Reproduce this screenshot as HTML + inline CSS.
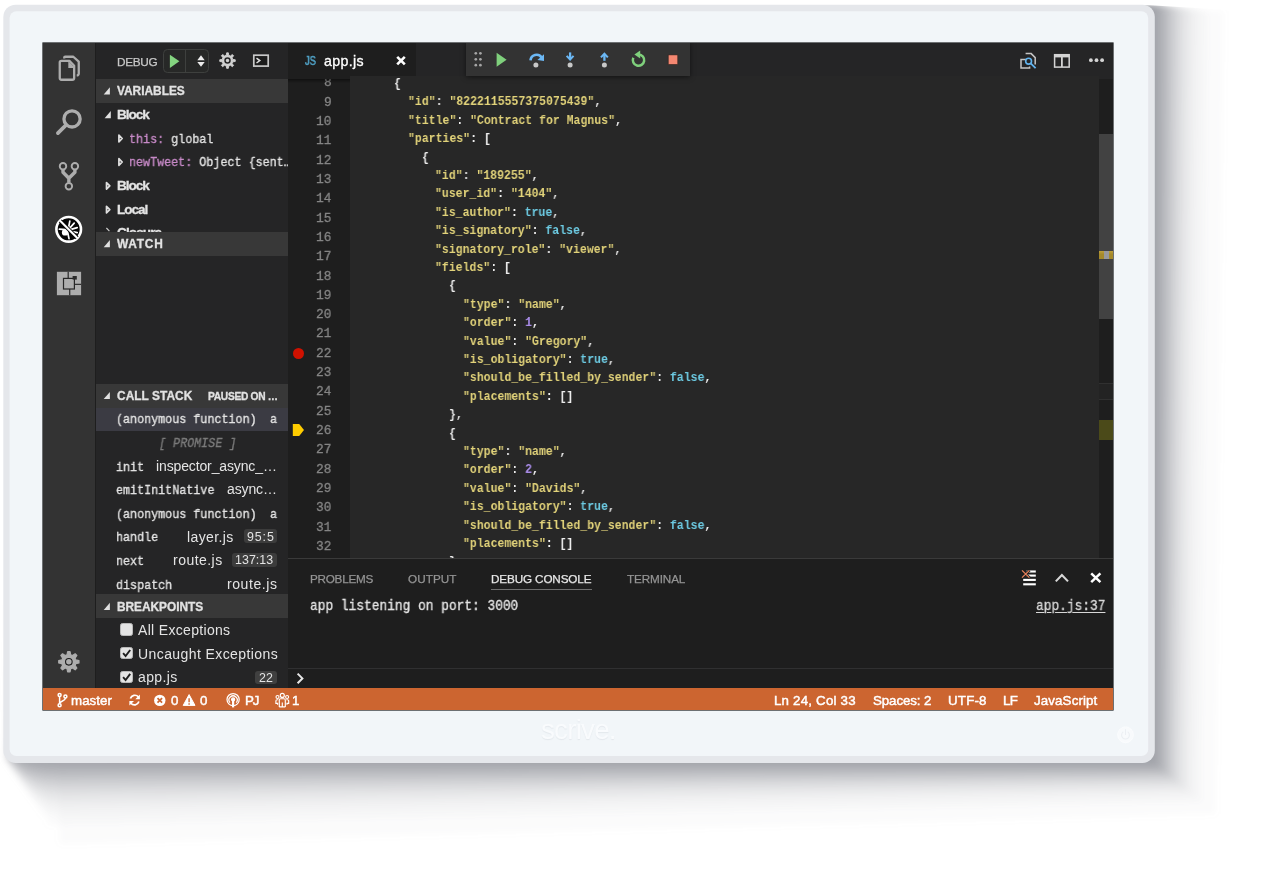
<!DOCTYPE html>
<html lang="en"><head><meta charset="utf-8"><title>Debug - app.js</title>
<style>
html,body{margin:0;padding:0;background:#fff;}
body{width:1280px;height:896px;position:relative;overflow:hidden;font-family:"Liberation Sans",sans-serif;}
.b{position:absolute;box-sizing:border-box;}
.t{position:absolute;white-space:pre;line-height:1em;will-change:transform;}
.s{font-family:"Liberation Sans",sans-serif;}
.m{font-family:"Liberation Mono",monospace;transform-origin:0 0;display:inline-block;}
svg{display:block;overflow:visible;}
.clip{position:absolute;overflow:hidden;}
.hv{-webkit-text-stroke:0.33px currentColor;}
.k{color:#e2d37a}.v{color:#6dcbe3}.n{color:#a98ce8}.p{color:#f0f0f0}
</style></head>
<body>
<svg class="b" style="left:0;top:0" width="1280" height="896" viewBox="0 0 1280 896"><filter id="shb" filterUnits="userSpaceOnUse" x="0" y="0" width="1280" height="896"><feGaussianBlur stdDeviation="3.0"/></filter><mask id="shm" maskUnits="userSpaceOnUse" x="0" y="0" width="1280" height="896"><g fill="#fff" fill-opacity="0.0387" filter="url(#shb)"><polygon points="25.3,26.7 1223.8,10.7 1215.8,814.1 59.8,844.1"/><polygon points="25.3,26.7 1208.0,8.9 1201.8,802.3 47.3,824.9"/><polygon points="25.3,26.7 1200.6,8.0 1195.2,796.9 41.6,815.9"/><polygon points="25.3,26.7 1195.7,7.5 1190.9,793.2 37.7,810.0"/><polygon points="25.3,26.7 1192.1,7.1 1187.7,790.6 34.9,805.6"/><polygon points="25.3,26.7 1189.2,6.7 1185.2,788.4 32.6,802.1"/><polygon points="25.3,26.7 1186.8,6.5 1183.0,786.6 30.7,799.2"/><polygon points="25.3,26.7 1184.7,6.2 1181.2,785.1 29.1,796.7"/><polygon points="25.3,26.7 1182.9,6.0 1179.6,783.7 27.7,794.5"/><polygon points="25.3,26.7 1181.3,5.8 1178.2,782.5 26.4,792.5"/><polygon points="25.3,26.7 1179.9,5.7 1176.9,781.5 25.3,790.8"/><polygon points="25.3,26.7 1178.6,5.5 1175.7,780.5 24.3,789.2"/><polygon points="25.3,26.7 1177.4,5.4 1174.7,779.6 23.3,787.7"/><polygon points="25.3,26.7 1176.3,5.3 1173.7,778.8 22.4,786.4"/><polygon points="25.3,26.7 1175.2,5.1 1172.8,778.0 21.6,785.1"/><polygon points="25.3,26.7 1174.3,5.0 1171.9,777.3 20.9,783.9"/><polygon points="25.3,26.7 1173.4,4.9 1171.1,776.6 20.2,782.8"/><polygon points="25.3,26.7 1172.5,4.8 1170.4,776.0 19.5,781.8"/><polygon points="25.3,26.7 1171.7,4.7 1169.7,775.4 18.9,780.8"/><polygon points="25.3,26.7 1170.9,4.7 1169.0,774.8 18.3,779.9"/><polygon points="25.3,26.7 1170.2,4.6 1168.3,774.3 17.7,779.0"/><polygon points="25.3,26.7 1169.5,4.5 1167.7,773.8 17.2,778.2"/><polygon points="25.3,26.7 1168.9,4.4 1167.2,773.3 16.6,777.4"/><polygon points="25.3,26.7 1168.3,4.4 1166.6,772.8 16.2,776.7"/><polygon points="25.3,26.7 1167.7,4.3 1166.1,772.4 15.7,775.9"/><polygon points="25.3,26.7 1167.1,4.2 1165.6,772.0 15.2,775.2"/><polygon points="25.3,26.7 1166.5,4.2 1165.1,771.5 14.8,774.5"/><polygon points="25.3,26.7 1166.0,4.1 1164.6,771.2 14.4,773.9"/><polygon points="25.3,26.7 1165.5,4.0 1164.1,770.8 14.0,773.3"/><polygon points="25.3,26.7 1165.0,4.0 1163.7,770.4 13.6,772.7"/><polygon points="25.3,26.7 1164.5,3.9 1163.3,770.0 13.2,772.1"/><polygon points="25.3,26.7 1164.0,3.9 1162.9,769.7 12.8,771.5"/><polygon points="25.3,26.7 1163.6,3.8 1162.5,769.4 12.5,771.0"/><polygon points="25.3,26.7 1163.1,3.8 1162.1,769.0 12.1,770.4"/><polygon points="25.3,26.7 1162.7,3.7 1161.7,768.7 11.8,769.9"/><polygon points="25.3,26.7 1162.3,3.7 1161.3,768.4 11.5,769.4"/><polygon points="25.3,26.7 1161.9,3.6 1161.0,768.1 11.2,768.9"/><polygon points="25.3,26.7 1161.5,3.6 1160.6,767.8 10.9,768.5"/><polygon points="25.3,26.7 1161.1,3.5 1160.3,767.5 10.6,768.0"/><polygon points="25.3,26.7 1160.8,3.5 1160.0,767.3 10.3,767.6"/><polygon points="25.3,26.7 1160.4,3.5 1159.6,767.0 10.0,767.1"/><polygon points="25.3,26.7 1160.0,3.4 1159.3,766.7 9.7,766.7"/><polygon points="25.3,26.7 1159.7,3.4 1159.0,766.5 9.4,766.3"/><polygon points="25.3,26.7 1159.4,3.3 1158.7,766.2 9.2,765.9"/><polygon points="25.3,26.7 1159.0,3.3 1158.4,766.0 8.9,765.5"/><polygon points="25.3,26.7 1158.7,3.3 1158.2,765.8 8.7,765.1"/><polygon points="25.3,26.7 1158.4,3.2 1157.9,765.5 8.4,764.7"/><polygon points="25.3,26.7 1158.1,3.2 1157.6,765.3 8.2,764.3"/><polygon points="25.3,26.7 1157.8,3.2 1157.3,765.1 7.9,764.0"/><polygon points="25.3,26.7 1157.5,3.1 1157.1,764.9 7.7,763.6"/><polygon points="25.3,26.7 1157.2,3.1 1156.8,764.6 7.5,763.3"/><polygon points="25.3,26.7 1156.9,3.1 1156.6,764.4 7.3,762.9"/><polygon points="25.3,26.7 1156.7,3.0 1156.3,764.2 7.0,762.6"/><polygon points="25.3,26.7 1156.4,3.0 1156.1,764.0 6.8,762.2"/><polygon points="25.3,26.7 1156.1,3.0 1155.9,763.8 6.6,761.9"/><polygon points="25.3,26.7 1155.9,2.9 1155.6,763.6 6.4,761.6"/><polygon points="25.3,26.7 1155.6,2.9 1155.4,763.4 6.2,761.3"/><polygon points="25.3,26.7 1155.3,2.9 1155.2,763.2 6.0,761.0"/><polygon points="25.3,26.7 1155.1,2.8 1154.9,763.1 5.8,760.7"/><polygon points="25.3,26.7 1154.9,2.8 1154.7,762.9 5.6,760.4"/><polygon points="25.3,26.7 1154.6,2.8 1154.5,762.7 5.4,760.1"/><polygon points="25.3,26.7 1154.4,2.8 1154.3,762.5 5.3,759.8"/><polygon points="25.3,26.7 1154.1,2.7 1154.1,762.4 5.1,759.5"/><polygon points="25.3,26.7 1153.9,2.7 1153.9,762.2 4.9,759.2"/></g></mask><clipPath id="shc"><path d="M0 5.2H1150L1280 13V896H0Z"/></clipPath><g clip-path="url(#shc)"><rect x="0" y="0" width="1280" height="896" fill="#62646f" fill-opacity="0.68" mask="url(#shm)"/></g></svg>
<svg class="b" style="left:0;top:0" width="1280" height="896" viewBox="0 0 1280 896"><rect x="3.3" y="4.7" width="1151.50" height="758.20" rx="12.3" fill="#e5e7eb"/><rect x="9.6" y="11.2" width="1138.60" height="744.90" rx="6.8" fill="#f2f6f9"/><circle cx="1125.5" cy="734.8" r="7.9" fill="#f8fafc" stroke="#fbfdfe" stroke-width="0.8"/><path d="M1122.9 732.2a3.9 3.9 0 1 0 5.2 0M1125.5 729.6v4.9" fill="none" stroke="#eceff3" stroke-width="1.1" stroke-linecap="round"/></svg>
<span class="t s" style="left:541.30px;top:716.36px;font-size:27.8px;color:#f9fbfd;letter-spacing:-0.787px;text-shadow:0 1px 1px rgba(120,130,150,.12);">scrive.</span>
<div class="b" style="left:42.70px;top:42.60px;width:1070.50px;height:667.00px;background:#1e1e1e;box-shadow:0 0 0 0.6px #16181a;"></div>
<div class="b" style="left:42.70px;top:42.60px;width:52.80px;height:645.70px;background:#333333;"></div>
<svg class="b" style="left:0;top:0" width="1280" height="896" viewBox="0 0 1280 896"><g fill="none" stroke="#adadad" stroke-width="2.3" stroke-linejoin="round"><path d="M65.2 56.75H73.3L78.75 61.6V73.6a1.8 1.8 0 0 1-1.8 1.8H65.2a1 1 0 0 1-1-1V57.75a1 1 0 0 1 1-1Z"/></g><path d="M61.2 58.4H70.6L76.7 64.6V79.2a3 3 0 0 1-3 3H61.2a3 3 0 0 1-3-3V61.4a3 3 0 0 1 3-3Z" fill="#333333"/><path d="M61.4 60.9H69.4L74.15 65.8V77.95a1.8 1.8 0 0 1-1.8 1.8H61.4a1.65 1.65 0 0 1-1.65-1.65V62.55a1.65 1.65 0 0 1 1.65-1.65Z" fill="#333333" stroke="#adadad" stroke-width="2.3" stroke-linejoin="round"/><path d="M68.3 61.2L73.9 66.9V67.9H68.3Z" fill="#adadad"/><circle cx="72.05" cy="118.9" r="8.1" fill="none" stroke="#adadad" stroke-width="3.3"/><path d="M66.2 124.9L57.9 133.1" stroke="#adadad" stroke-width="3.7" stroke-linecap="round"/><g fill="none" stroke="#adadad"><path d="M63 169.8V172.2L68.85 178.3V182.6M74.9 169.8V172.2L68.85 178.3" stroke-width="3.4" stroke-linejoin="round"/><circle cx="63" cy="166.2" r="3.25" stroke-width="1.9"/><circle cx="74.9" cy="166.2" r="3.25" stroke-width="1.9"/><circle cx="68.85" cy="186.3" r="3.25" stroke-width="1.9"/></g><circle cx="68.7" cy="229.35" r="12.3" fill="#050505" stroke="#ffffff" stroke-width="2.6"/><g stroke="#ffffff" stroke-width="1.7" stroke-linecap="round" fill="none"><path d="M68.2 229.5L69.8 221.2M69.5 228.3L74.2 223.2M70.3 229.6L77.2 227.6M70 231.2L77.2 232.6M66 229.6L59.4 229.2M67.8 233L69 238.6"/></g><circle cx="65.1" cy="232.4" r="3.2" fill="#ffffff"/><circle cx="68.9" cy="228.7" r="2.3" fill="#ffffff"/><path d="M60.2 220.9L77.2 237.8" stroke="#050505" stroke-width="3.9"/><path d="M59.6 220.3L77.8 238.4" stroke="#ffffff" stroke-width="2.1"/><rect x="56.9" y="271.8" width="24.2" height="23.4" fill="#adadad"/><path d="M68.2 271.8V278.4M74.4 284.4H81.1M69.7 289V295.2" stroke="#333333" stroke-width="1.3" fill="none"/><rect x="63.5" y="278.4" width="10.9" height="10.6" fill="#adadad" stroke="#262626" stroke-width="1.2"/><rect x="72.6" y="276" width="4.2" height="3.6" fill="#2b2b2b"/><path d="M72 276.9H77.4V282.6" stroke="#adadad" stroke-width="0" fill="none"/><path d="M67.00 654.84 L67.65 651.67 L70.05 651.67 L70.70 654.84 L72.47 655.57 L75.16 653.79 L76.86 655.49 L75.08 658.18 L75.81 659.95 L78.98 660.60 L78.98 663.00 L75.81 663.65 L75.08 665.42 L76.86 668.11 L75.16 669.81 L72.47 668.03 L70.70 668.76 L70.05 671.93 L67.65 671.93 L67.00 668.76 L65.23 668.03 L62.54 669.81 L60.84 668.11 L62.62 665.42 L61.89 663.65 L58.72 663.00 L58.72 660.60 L61.89 659.95 L62.62 658.18 L60.84 655.49 L62.54 653.79 L65.23 655.57Z" fill="#adadad" stroke="#adadad" stroke-width="1.2" stroke-linejoin="round"/><circle cx="68.85" cy="661.8" r="3.3" fill="#adadad" stroke="#1c1c1c" stroke-width="1.1"/></svg>
<div class="b" style="left:95.50px;top:42.60px;width:192.60px;height:645.70px;background:#252526;"></div>
<span class="t s" style="left:116.90px;top:56.91px;font-size:11.8px;color:#c8c8c8;letter-spacing:-0.341px;-webkit-text-stroke:0.25px #c8c8c8;">DEBUG</span>
<div class="b" style="left:163.00px;top:49.00px;width:46.00px;height:24.00px;background:#272827;border:1px solid #3e403e;border-radius:4.5px;"></div>
<div class="b" style="left:185.00px;top:50.00px;width:1.00px;height:22.00px;background:#3e403e;"></div>
<div class="b" style="left:95.50px;top:79.00px;width:192.60px;height:23.80px;background:#383838;"></div>
<span class="t s" style="left:117.10px;top:86.13px;font-size:11.9px;color:#e2e2e2;letter-spacing:-0.010px;font-weight:bold;-webkit-text-stroke:0.3px #e2e2e2;">VARIABLES</span>
<div class="b" style="left:95.50px;top:231.70px;width:192.60px;height:23.90px;background:#383838;"></div>
<span class="t s" style="left:117.10px;top:238.83px;font-size:11.9px;color:#e2e2e2;letter-spacing:0.764px;font-weight:bold;-webkit-text-stroke:0.3px #e2e2e2;">WATCH</span>
<div class="b" style="left:95.50px;top:383.60px;width:192.60px;height:24.10px;background:#383838;"></div>
<span class="t s" style="left:117.10px;top:390.73px;font-size:11.9px;color:#e2e2e2;letter-spacing:0.053px;font-weight:bold;-webkit-text-stroke:0.3px #e2e2e2;">CALL STACK</span>
<div class="b" style="left:95.50px;top:594.40px;width:192.60px;height:23.50px;background:#383838;"></div>
<span class="t s" style="left:117.10px;top:601.53px;font-size:11.9px;color:#e2e2e2;letter-spacing:-0.041px;font-weight:bold;-webkit-text-stroke:0.3px #e2e2e2;">BREAKPOINTS</span>
<span class="t s" style="left:208.20px;top:391.96px;font-size:10.2px;color:#e2e2e2;letter-spacing:-0.282px;font-weight:bold;-webkit-text-stroke:0.3px #e2e2e2;">PAUSED ON …</span>
<span class="t s" style="left:117.10px;top:107.99px;font-size:13.6px;color:#e4e4e4;letter-spacing:-1.059px;font-weight:bold;-webkit-text-stroke:0.3px #e4e4e4;">Block</span>
<span class="t m hv" style="left:129.30px;top:132.84px;font-size:13.0px;transform:scaleX(0.9013);color:#e4e4e4;"><span style="color:#c98bc9">this:</span> global</span>
<div class="clip" style="left:95.5px;top:150px;width:192.6px;height:24px"><span class="t m hv" style="left:33.80px;top:6.34px;font-size:13.0px;transform:scaleX(0.9013);color:#e4e4e4;"><span style="color:#c98bc9">newTweet:</span> Object {sent…</span></div>
<span class="t s" style="left:117.10px;top:178.89px;font-size:13.6px;color:#e4e4e4;letter-spacing:-1.059px;font-weight:bold;-webkit-text-stroke:0.3px #e4e4e4;">Block</span>
<span class="t s" style="left:117.10px;top:202.69px;font-size:13.6px;color:#e4e4e4;letter-spacing:-1.055px;font-weight:bold;-webkit-text-stroke:0.3px #e4e4e4;">Local</span>
<div class="clip" style="left:95.5px;top:220px;width:192.6px;height:11.7px"><span class="t s" style="left:21.60px;top:5.69px;font-size:13.6px;color:#e4e4e4;letter-spacing:-0.906px;font-weight:bold;-webkit-text-stroke:0.3px #e4e4e4;">Closure</span></div>
<div class="b" style="left:95.50px;top:407.70px;width:192.60px;height:23.50px;background:#3b3b43;"></div>
<span class="t m hv" style="left:116.40px;top:413.34px;font-size:13.0px;transform:scaleX(0.9013);color:#e4e4e4;">(anonymous function)</span>
<span class="t m hv" style="left:269.60px;top:413.34px;font-size:13.0px;transform:scaleX(0.9013);color:#e4e4e4;">a</span>
<span class="t m hv" style="left:159.30px;top:436.94px;font-size:13.0px;transform:scaleX(0.9013);color:#7c7c7c;font-style:italic;">[ PROMISE ]</span>
<span class="t m hv" style="left:116.40px;top:460.54px;font-size:13.0px;transform:scaleX(0.9013);color:#e4e4e4;">init</span>
<span class="t s" style="left:156.30px;top:458.75px;font-size:14px;color:#e4e4e4;letter-spacing:-0.128px;">inspector_async_…</span>
<span class="t m hv" style="left:116.40px;top:484.14px;font-size:13.0px;transform:scaleX(0.9013);color:#e4e4e4;">emitInitNative</span>
<span class="t s" style="left:227.30px;top:482.35px;font-size:14px;color:#e4e4e4;letter-spacing:-0.135px;">async…</span>
<span class="t m hv" style="left:116.40px;top:507.74px;font-size:13.0px;transform:scaleX(0.9013);color:#e4e4e4;">(anonymous function)</span>
<span class="t m hv" style="left:269.60px;top:507.74px;font-size:13.0px;transform:scaleX(0.9013);color:#e4e4e4;">a</span>
<span class="t m hv" style="left:116.40px;top:531.34px;font-size:13.0px;transform:scaleX(0.9013);color:#e4e4e4;">handle</span>
<span class="t s" style="left:187.00px;top:529.55px;font-size:14px;color:#e4e4e4;letter-spacing:0.389px;">layer.js</span>
<div class="b" style="left:243.70px;top:529.00px;width:33.30px;height:14.20px;background:#3c3c3c;border-radius:3px;"></div>
<span class="t s" style="left:246.80px;top:530.60px;font-size:12.4px;color:#e4e4e4;letter-spacing:0.889px;">95:5</span>
<span class="t m hv" style="left:116.40px;top:554.94px;font-size:13.0px;transform:scaleX(0.9013);color:#e4e4e4;">next</span>
<span class="t s" style="left:173.00px;top:553.15px;font-size:14px;color:#e4e4e4;letter-spacing:0.470px;">route.js</span>
<div class="b" style="left:232.30px;top:552.60px;width:44.70px;height:14.20px;background:#3c3c3c;border-radius:3px;"></div>
<span class="t s" style="left:235.40px;top:554.20px;font-size:12.4px;color:#e4e4e4;letter-spacing:0.054px;">137:13</span>
<span class="t m hv" style="left:116.40px;top:578.54px;font-size:13.0px;transform:scaleX(0.9013);color:#e4e4e4;">dispatch</span>
<span class="t s" style="left:227.30px;top:576.75px;font-size:14px;color:#e4e4e4;letter-spacing:0.584px;">route.js</span>
<div class="b" style="left:120.20px;top:623.20px;width:12.60px;height:12.60px;background:#e4e4e4;border-radius:2.5px;border:1px solid #b9b9b9;"></div>
<span class="t s" style="left:137.60px;top:623.15px;font-size:14px;color:#e4e4e4;letter-spacing:0.321px;">All Exceptions</span>
<div class="b" style="left:120.20px;top:646.80px;width:12.60px;height:12.60px;background:#e4e4e4;border-radius:2.5px;border:1px solid #b9b9b9;"></div>
<span class="t s" style="left:137.60px;top:647.35px;font-size:14px;color:#e4e4e4;letter-spacing:0.411px;">Uncaught Exceptions</span>
<div class="b" style="left:120.20px;top:670.70px;width:12.60px;height:12.60px;background:#e4e4e4;border-radius:2.5px;border:1px solid #b9b9b9;"></div>
<span class="t s" style="left:137.60px;top:670.45px;font-size:14px;color:#e4e4e4;letter-spacing:0.368px;">app.js</span>
<div class="b" style="left:255.20px;top:670.70px;width:21.80px;height:13.20px;background:#404040;border-radius:3px;"></div>
<span class="t s" style="left:259.20px;top:672.10px;font-size:12.4px;color:#e4e4e4;letter-spacing:0.007px;">22</span>
<svg class="b" style="left:0;top:0" width="1280" height="896" viewBox="0 0 1280 896"><path d="M169.9 54.7L179.4 61.3L169.9 67.9Z" fill="#84d480"/><path d="M201 55.3L204.7 60.3H197.3ZM201 66.7L204.7 61.9H197.3Z" fill="#ececec"/><path d="M226.30 55.23 L226.64 52.85 L228.36 52.85 L228.70 55.23 L230.45 55.96 L232.38 54.51 L233.59 55.72 L232.14 57.65 L232.87 59.40 L235.25 59.74 L235.25 61.46 L232.87 61.80 L232.14 63.55 L233.59 65.48 L232.38 66.69 L230.45 65.24 L228.70 65.97 L228.36 68.35 L226.64 68.35 L226.30 65.97 L224.55 65.24 L222.62 66.69 L221.41 65.48 L222.86 63.55 L222.13 61.80 L219.75 61.46 L219.75 59.74 L222.13 59.40 L222.86 57.65 L221.41 55.72 L222.62 54.51 L224.55 55.96Z" fill="#d0d0d0" stroke="#d0d0d0" stroke-width="0.9" stroke-linejoin="round"/><circle cx="227.5" cy="60.6" r="2.5" fill="#d0d0d0" stroke="#252526" stroke-width="1.5"/><rect x="253.8" y="55.2" width="14.4" height="10.9" fill="#1c1c1c" stroke="#c8c8c8" stroke-width="1.7"/><path d="M256.5 58.2L259.8 60.6L256.5 63" fill="none" stroke="#e0e0e0" stroke-width="1.5"/><path d="M109.9 87.3V94.5H103.7Z" fill="#e0e0e0"/><path d="M109.9 240.0V247.2H103.7Z" fill="#e0e0e0"/><path d="M109.9 391.9V399.1H103.7Z" fill="#e0e0e0"/><path d="M109.9 602.7V609.9H103.7Z" fill="#e0e0e0"/><path d="M110.8 111.1V118.3H104.6Z" fill="#e0e0e0"/><path d="M118.9 135.2L122.2 138.5L118.9 141.8Z" fill="#4a4a4a" stroke="#dedede" stroke-width="1.7" stroke-linejoin="round"/><path d="M118.9 158.7L122.2 162.0L118.9 165.3Z" fill="#4a4a4a" stroke="#dedede" stroke-width="1.7" stroke-linejoin="round"/><path d="M106.5 182.5L109.8 185.8L106.5 189.1Z" fill="#4a4a4a" stroke="#dedede" stroke-width="1.7" stroke-linejoin="round"/><path d="M106.5 206.3L109.8 209.6L106.5 212.9Z" fill="#4a4a4a" stroke="#dedede" stroke-width="1.7" stroke-linejoin="round"/><path d="M106.4 228.0L109.4 231.2" fill="none" stroke="#cfcfcf" stroke-width="1.1"/><path d="M123.1 653.2L125.6 656.1L130.2 650.0" fill="none" stroke="#1e1e1e" stroke-width="1.9"/><path d="M123.1 677.1L125.6 680.0L130.2 673.9" fill="none" stroke="#1e1e1e" stroke-width="1.9"/></svg>
<div class="b" style="left:288.10px;top:42.60px;width:825.10px;height:33.60px;background:#252526;"></div>
<div class="b" style="left:288.10px;top:42.60px;width:127.90px;height:36.20px;background:#1e1e1e;"></div>
<span class="t s" style="left:304.90px;top:54.94px;font-size:12.0px;color:#4f9fc2;transform:scaleX(0.78);transform-origin:0 0;-webkit-text-stroke:0.6px #4f9fc2;">JS</span>
<span class="t s" style="left:323.60px;top:54.18px;font-size:14.2px;color:#ffffff;letter-spacing:0.341px;-webkit-text-stroke:0.3px #fff;">app.js</span>
<div class="b" style="left:288.10px;top:76.20px;width:61.90px;height:482.00px;background:#1e1e1e;"></div>
<div class="b" style="left:350.00px;top:76.20px;width:748.90px;height:482.00px;background:#272727;"></div>
<div class="b" style="left:1098.90px;top:76.20px;width:14.30px;height:482.00px;background:#252526;"></div>
<div class="b" style="left:1098.90px;top:79.40px;width:14.30px;height:478.80px;background:#1e1e1e;"></div>
<div class="b" style="left:1098.90px;top:133.80px;width:14.30px;height:185.70px;background:#424242;"></div>
<div class="b" style="left:1098.90px;top:251.40px;width:14.30px;height:8.00px;background:linear-gradient(#bfa03a,#a5892a 40%);"></div>
<div class="b" style="left:1104.40px;top:251.40px;width:5.00px;height:8.00px;background:#98989c;"></div>
<div class="b" style="left:1098.90px;top:382.50px;width:14.30px;height:17.90px;background:#232323;border-top:1px solid #303030;border-bottom:1px solid #303030;"></div>
<div class="b" style="left:1098.90px;top:420.00px;width:14.30px;height:19.60px;background:#4b4a19;"></div>
<div class="clip" style="left:288.1px;top:79.4px;width:61.9px;height:478.8px"><span class="t m" style="left:35.70px;top:-2.97px;font-size:13.0px;transform:scaleX(0.9872);color:#858585;-webkit-text-stroke:0.3px #858585;">8</span><span class="t m" style="left:35.70px;top:16.34px;font-size:13.0px;transform:scaleX(0.9872);color:#858585;-webkit-text-stroke:0.3px #858585;">9</span><span class="t m" style="left:28.00px;top:35.65px;font-size:13.0px;transform:scaleX(0.9872);color:#858585;-webkit-text-stroke:0.3px #858585;">10</span><span class="t m" style="left:28.00px;top:54.96px;font-size:13.0px;transform:scaleX(0.9872);color:#858585;-webkit-text-stroke:0.3px #858585;">11</span><span class="t m" style="left:28.00px;top:74.27px;font-size:13.0px;transform:scaleX(0.9872);color:#858585;-webkit-text-stroke:0.3px #858585;">12</span><span class="t m" style="left:28.00px;top:93.58px;font-size:13.0px;transform:scaleX(0.9872);color:#858585;-webkit-text-stroke:0.3px #858585;">13</span><span class="t m" style="left:28.00px;top:112.89px;font-size:13.0px;transform:scaleX(0.9872);color:#858585;-webkit-text-stroke:0.3px #858585;">14</span><span class="t m" style="left:28.00px;top:132.20px;font-size:13.0px;transform:scaleX(0.9872);color:#858585;-webkit-text-stroke:0.3px #858585;">15</span><span class="t m" style="left:28.00px;top:151.51px;font-size:13.0px;transform:scaleX(0.9872);color:#858585;-webkit-text-stroke:0.3px #858585;">16</span><span class="t m" style="left:28.00px;top:170.82px;font-size:13.0px;transform:scaleX(0.9872);color:#858585;-webkit-text-stroke:0.3px #858585;">17</span><span class="t m" style="left:28.00px;top:190.13px;font-size:13.0px;transform:scaleX(0.9872);color:#858585;-webkit-text-stroke:0.3px #858585;">18</span><span class="t m" style="left:28.00px;top:209.44px;font-size:13.0px;transform:scaleX(0.9872);color:#858585;-webkit-text-stroke:0.3px #858585;">19</span><span class="t m" style="left:28.00px;top:228.75px;font-size:13.0px;transform:scaleX(0.9872);color:#858585;-webkit-text-stroke:0.3px #858585;">20</span><span class="t m" style="left:28.00px;top:248.06px;font-size:13.0px;transform:scaleX(0.9872);color:#858585;-webkit-text-stroke:0.3px #858585;">21</span><span class="t m" style="left:28.00px;top:267.37px;font-size:13.0px;transform:scaleX(0.9872);color:#858585;-webkit-text-stroke:0.3px #858585;">22</span><span class="t m" style="left:28.00px;top:286.68px;font-size:13.0px;transform:scaleX(0.9872);color:#858585;-webkit-text-stroke:0.3px #858585;">23</span><span class="t m" style="left:28.00px;top:305.99px;font-size:13.0px;transform:scaleX(0.9872);color:#858585;-webkit-text-stroke:0.3px #858585;">24</span><span class="t m" style="left:28.00px;top:325.30px;font-size:13.0px;transform:scaleX(0.9872);color:#858585;-webkit-text-stroke:0.3px #858585;">25</span><span class="t m" style="left:28.00px;top:344.61px;font-size:13.0px;transform:scaleX(0.9872);color:#858585;-webkit-text-stroke:0.3px #858585;">26</span><span class="t m" style="left:28.00px;top:363.92px;font-size:13.0px;transform:scaleX(0.9872);color:#858585;-webkit-text-stroke:0.3px #858585;">27</span><span class="t m" style="left:28.00px;top:383.23px;font-size:13.0px;transform:scaleX(0.9872);color:#858585;-webkit-text-stroke:0.3px #858585;">28</span><span class="t m" style="left:28.00px;top:402.54px;font-size:13.0px;transform:scaleX(0.9872);color:#858585;-webkit-text-stroke:0.3px #858585;">29</span><span class="t m" style="left:28.00px;top:421.85px;font-size:13.0px;transform:scaleX(0.9872);color:#858585;-webkit-text-stroke:0.3px #858585;">30</span><span class="t m" style="left:28.00px;top:441.16px;font-size:13.0px;transform:scaleX(0.9872);color:#858585;-webkit-text-stroke:0.3px #858585;">31</span><span class="t m" style="left:28.00px;top:460.47px;font-size:13.0px;transform:scaleX(0.9872);color:#858585;-webkit-text-stroke:0.3px #858585;">32</span></div>
<div class="b" style="left:288.10px;top:78.60px;width:61.90px;height:4.40px;background:linear-gradient(rgba(0,0,0,.42),rgba(0,0,0,0));"></div>
<div class="clip" style="left:350.0px;top:76.2px;width:748.9px;height:482.0px"><span class="t m" style="left:44.05px;top:0.76px;font-size:13.1px;transform:scaleX(0.8779);color:#f2f2f2;font-weight:bold;">{</span><span class="t m" style="left:57.85px;top:19.16px;font-size:13.1px;transform:scaleX(0.8779);color:#f2f2f2;font-weight:bold;"><span class="k">"id"</span>: <span class="k">"8222115557375075439"</span>,</span><span class="t m" style="left:57.85px;top:37.56px;font-size:13.1px;transform:scaleX(0.8779);color:#f2f2f2;font-weight:bold;"><span class="k">"title"</span>: <span class="k">"Contract for Magnus"</span>,</span><span class="t m" style="left:57.85px;top:55.96px;font-size:13.1px;transform:scaleX(0.8779);color:#f2f2f2;font-weight:bold;"><span class="k">"parties"</span>: [</span><span class="t m" style="left:71.65px;top:74.36px;font-size:13.1px;transform:scaleX(0.8779);color:#f2f2f2;font-weight:bold;">{</span><span class="t m" style="left:85.45px;top:92.76px;font-size:13.1px;transform:scaleX(0.8779);color:#f2f2f2;font-weight:bold;"><span class="k">"id"</span>: <span class="k">"189255"</span>,</span><span class="t m" style="left:85.45px;top:111.16px;font-size:13.1px;transform:scaleX(0.8779);color:#f2f2f2;font-weight:bold;"><span class="k">"user_id"</span>: <span class="k">"1404"</span>,</span><span class="t m" style="left:85.45px;top:129.56px;font-size:13.1px;transform:scaleX(0.8779);color:#f2f2f2;font-weight:bold;"><span class="k">"is_author"</span>: <span class="v">true</span>,</span><span class="t m" style="left:85.45px;top:147.96px;font-size:13.1px;transform:scaleX(0.8779);color:#f2f2f2;font-weight:bold;"><span class="k">"is_signatory"</span>: <span class="v">false</span>,</span><span class="t m" style="left:85.45px;top:166.36px;font-size:13.1px;transform:scaleX(0.8779);color:#f2f2f2;font-weight:bold;"><span class="k">"signatory_role"</span>: <span class="k">"viewer"</span>,</span><span class="t m" style="left:85.45px;top:184.76px;font-size:13.1px;transform:scaleX(0.8779);color:#f2f2f2;font-weight:bold;"><span class="k">"fields"</span>: [</span><span class="t m" style="left:99.25px;top:203.16px;font-size:13.1px;transform:scaleX(0.8779);color:#f2f2f2;font-weight:bold;">{</span><span class="t m" style="left:113.05px;top:221.56px;font-size:13.1px;transform:scaleX(0.8779);color:#f2f2f2;font-weight:bold;"><span class="k">"type"</span>: <span class="k">"name"</span>,</span><span class="t m" style="left:113.05px;top:239.96px;font-size:13.1px;transform:scaleX(0.8779);color:#f2f2f2;font-weight:bold;"><span class="k">"order"</span>: <span class="n">1</span>,</span><span class="t m" style="left:113.05px;top:258.36px;font-size:13.1px;transform:scaleX(0.8779);color:#f2f2f2;font-weight:bold;"><span class="k">"value"</span>: <span class="k">"Gregory"</span>,</span><span class="t m" style="left:113.05px;top:276.76px;font-size:13.1px;transform:scaleX(0.8779);color:#f2f2f2;font-weight:bold;"><span class="k">"is_obligatory"</span>: <span class="v">true</span>,</span><span class="t m" style="left:113.05px;top:295.16px;font-size:13.1px;transform:scaleX(0.8779);color:#f2f2f2;font-weight:bold;"><span class="k">"should_be_filled_by_sender"</span>: <span class="v">false</span>,</span><span class="t m" style="left:113.05px;top:313.56px;font-size:13.1px;transform:scaleX(0.8779);color:#f2f2f2;font-weight:bold;"><span class="k">"placements"</span>: []</span><span class="t m" style="left:99.25px;top:331.96px;font-size:13.1px;transform:scaleX(0.8779);color:#f2f2f2;font-weight:bold;">},</span><span class="t m" style="left:99.25px;top:350.36px;font-size:13.1px;transform:scaleX(0.8779);color:#f2f2f2;font-weight:bold;">{</span><span class="t m" style="left:113.05px;top:368.76px;font-size:13.1px;transform:scaleX(0.8779);color:#f2f2f2;font-weight:bold;"><span class="k">"type"</span>: <span class="k">"name"</span>,</span><span class="t m" style="left:113.05px;top:387.16px;font-size:13.1px;transform:scaleX(0.8779);color:#f2f2f2;font-weight:bold;"><span class="k">"order"</span>: <span class="n">2</span>,</span><span class="t m" style="left:113.05px;top:405.56px;font-size:13.1px;transform:scaleX(0.8779);color:#f2f2f2;font-weight:bold;"><span class="k">"value"</span>: <span class="k">"Davids"</span>,</span><span class="t m" style="left:113.05px;top:423.96px;font-size:13.1px;transform:scaleX(0.8779);color:#f2f2f2;font-weight:bold;"><span class="k">"is_obligatory"</span>: <span class="v">true</span>,</span><span class="t m" style="left:113.05px;top:442.36px;font-size:13.1px;transform:scaleX(0.8779);color:#f2f2f2;font-weight:bold;"><span class="k">"should_be_filled_by_sender"</span>: <span class="v">false</span>,</span><span class="t m" style="left:113.05px;top:460.76px;font-size:13.1px;transform:scaleX(0.8779);color:#f2f2f2;font-weight:bold;"><span class="k">"placements"</span>: []</span><span class="t m" style="left:99.25px;top:479.16px;font-size:13.1px;transform:scaleX(0.8779);color:#f2f2f2;font-weight:bold;">}</span></div>
<div class="clip" style="left:42.7px;top:43.0px;width:1070.5px;height:60px"><div class="b" style="left:423.30px;top:-1.00px;width:223.80px;height:33.60px;background:#333333;box-shadow:0 1px 5px rgba(0,0,0,.55);"></div></div>
<svg class="b" style="left:0;top:0" width="1280" height="896" viewBox="0 0 1280 896"><path d="M397.2 56.8L404.8 64.4M404.8 56.8L397.2 64.4" stroke="#ffffff" stroke-width="2.6" fill="none"/><circle cx="298.5" cy="353.5" r="5.5" fill="#d01100"/><path d="M292.8 424H299.2L304 430L299.2 436H292.8Z" fill="#ffcc00"/><circle cx="475.8" cy="53.3" r="1.35" fill="#a6a6a6"/><circle cx="475.8" cy="59.3" r="1.35" fill="#a6a6a6"/><circle cx="475.8" cy="65.2" r="1.35" fill="#a6a6a6"/><circle cx="480.4" cy="53.3" r="1.35" fill="#a6a6a6"/><circle cx="480.4" cy="59.3" r="1.35" fill="#a6a6a6"/><circle cx="480.4" cy="65.2" r="1.35" fill="#a6a6a6"/><path d="M496.6 52.8L506.6 59.8L496.6 66.8Z" fill="#7fd07c"/><path d="M530.5 60.4A6.1 6.1 0 0 1 541.6 57.4" fill="none" stroke="#6cb8f5" stroke-width="2.6"/><path d="M537.4 60.0L544.0 61.0L544.0 54.2Z" fill="#6cb8f5"/><circle cx="535.9" cy="64.9" r="2.5" fill="#c8c8c8"/><path d="M570.1 52.4V58.6" fill="none" stroke="#6cb8f5" stroke-width="2.3"/><path d="M565.9 56.4L570.1 61.0L574.3 56.4L572.8 55.2L570.1 58.0L567.4 55.2Z" fill="#6cb8f5"/><circle cx="570.1" cy="64.9" r="2.5" fill="#c8c8c8"/><path d="M604.4 60.8V54.6" fill="none" stroke="#6cb8f5" stroke-width="2.3"/><path d="M600.2 56.8L604.4 52.2L608.6 56.8L607.1 58.0L604.4 55.2L601.7 58.0Z" fill="#6cb8f5"/><circle cx="604.4" cy="64.9" r="2.5" fill="#c8c8c8"/><path d="M633.3 57.8A5.7 5.7 0 1 0 638.7 54.4" fill="none" stroke="#7fd07c" stroke-width="2.5"/><path d="M640.2 50.6L634.4 54.5L640.2 58.6Z" fill="#7fd07c"/><rect x="668.2" y="54.9" width="9.6" height="9.6" fill="#f48771" stroke="#2a1f1c" stroke-width="0.6"/><path d="M1025.6 53.6H1031.2L1035.2 57.6V64.6" fill="none" stroke="#c5c5c5" stroke-width="1.5"/><path d="M1021.0 59.4H1026.2M1021.0 58.7V67.9H1029.6V66.4" fill="none" stroke="#c5c5c5" stroke-width="1.5"/><circle cx="1028.6" cy="61.2" r="2.9" fill="#252526" stroke="#63b4ee" stroke-width="1.6"/><path d="M1030.7 63.4L1035.6 68.2" stroke="#63b4ee" stroke-width="1.8" fill="none"/><rect x="1054.6" y="54.7" width="14.6" height="12.4" fill="none" stroke="#d4d4d4" stroke-width="1.5"/><path d="M1054.6 56.2H1069.2" stroke="#d4d4d4" stroke-width="2.4"/><path d="M1061.9 55V67" stroke="#d4d4d4" stroke-width="1.8"/><circle cx="1090.9" cy="60.2" r="1.9" fill="#d4d4d4"/><circle cx="1096.5" cy="60.2" r="1.9" fill="#d4d4d4"/><circle cx="1102.1" cy="60.2" r="1.9" fill="#d4d4d4"/></svg>
<div class="b" style="left:288.10px;top:558.20px;width:825.10px;height:130.10px;background:#1e1e1e;border-top:1px solid #3a3a3a;"></div>
<span class="t s" style="left:310.00px;top:572.99px;font-size:11.7px;color:#949494;letter-spacing:-0.246px;-webkit-text-stroke:0.25px #949494;">PROBLEMS</span>
<span class="t s" style="left:407.80px;top:572.99px;font-size:11.7px;color:#949494;letter-spacing:0.080px;-webkit-text-stroke:0.25px #949494;">OUTPUT</span>
<span class="t s" style="left:491.40px;top:572.99px;font-size:11.7px;color:#e7e7e7;letter-spacing:-0.123px;-webkit-text-stroke:0.25px #e7e7e7;">DEBUG CONSOLE</span>
<span class="t s" style="left:626.60px;top:572.99px;font-size:11.7px;color:#949494;letter-spacing:-0.108px;-webkit-text-stroke:0.25px #949494;">TERMINAL</span>
<div class="b" style="left:491.40px;top:588.80px;width:100.60px;height:1.00px;background:#6f6f6f;"></div>
<span class="t m hv" style="left:310.00px;top:598.94px;font-size:14.17px;transform:scaleX(0.9080);color:#e4e4e4;">app listening on port: 3000</span>
<span class="t m hv" style="left:1036.30px;top:598.94px;font-size:14.17px;transform:scaleX(0.9080);color:#d8d8d8;text-decoration:underline;text-underline-offset:1.5px;text-decoration-thickness:1px;">app.js:37</span>
<div class="b" style="left:288.10px;top:668.20px;width:825.10px;height:1.00px;background:#303031;"></div>
<svg class="b" style="left:0;top:0" width="1280" height="896" viewBox="0 0 1280 896"><path d="M297.6 673.6L302.4 678.4L297.6 683.2" fill="none" stroke="#e8e8e8" stroke-width="2"/><path d="M1026.6 571.5H1035.8" stroke="#ffffff" stroke-width="2.1"/><path d="M1026.6 575.6H1035.8" stroke="#ffffff" stroke-width="2.1"/><path d="M1023.2 579.9H1035.8" stroke="#ffffff" stroke-width="2.1"/><path d="M1023.2 584.3H1035.8" stroke="#ffffff" stroke-width="2.1"/><path d="M1021.8 570.2L1029.6 577.8M1029.6 570.2L1021.8 577.8" stroke="#1e1e1e" stroke-width="2.6" fill="none"/><path d="M1022 570.4L1029.4 577.6M1029.4 570.4L1022 577.6" stroke="#e8825c" stroke-width="1.3" fill="none"/><path d="M1055.8 581.4L1061.9 575.0L1068.0 581.4" fill="none" stroke="#d8d8d8" stroke-width="2.1"/><path d="M1091.2 573.4L1100.4 582.2M1100.4 573.4L1091.2 582.2" stroke="#ffffff" stroke-width="2.5" fill="none"/></svg>
<div class="b" style="left:42.70px;top:688.30px;width:1070.50px;height:21.30px;background:#cc6530;"></div>
<span class="t s" style="left:71.30px;top:694.34px;font-size:13.3px;color:#ffffff;letter-spacing:0.050px;-webkit-text-stroke:0.45px #fff;">master</span>
<span class="t s" style="left:170.60px;top:694.34px;font-size:13.3px;color:#ffffff;letter-spacing:0.003px;-webkit-text-stroke:0.45px #fff;">0</span>
<span class="t s" style="left:199.70px;top:694.34px;font-size:13.3px;color:#ffffff;letter-spacing:0.103px;-webkit-text-stroke:0.45px #fff;">0</span>
<span class="t s" style="left:245.00px;top:694.34px;font-size:13.3px;color:#ffffff;letter-spacing:-1.122px;-webkit-text-stroke:0.45px #fff;">PJ</span>
<span class="t s" style="left:292.00px;top:694.34px;font-size:13.3px;color:#ffffff;letter-spacing:-1.197px;-webkit-text-stroke:0.45px #fff;">1</span>
<span class="t s" style="left:774.00px;top:694.34px;font-size:13.3px;color:#ffffff;letter-spacing:0.207px;-webkit-text-stroke:0.45px #fff;">Ln 24, Col 33</span>
<span class="t s" style="left:872.50px;top:694.34px;font-size:13.3px;color:#ffffff;letter-spacing:-0.081px;-webkit-text-stroke:0.45px #fff;">Spaces: 2</span>
<span class="t s" style="left:947.90px;top:694.34px;font-size:13.3px;color:#ffffff;letter-spacing:0.205px;-webkit-text-stroke:0.45px #fff;">UTF-8</span>
<span class="t s" style="left:1003.00px;top:694.34px;font-size:13.3px;color:#ffffff;letter-spacing:-0.522px;-webkit-text-stroke:0.45px #fff;">LF</span>
<span class="t s" style="left:1034.20px;top:694.34px;font-size:13.3px;color:#ffffff;letter-spacing:0.134px;-webkit-text-stroke:0.45px #fff;">JavaScript</span>
<svg class="b" style="left:0;top:0" width="1280" height="896" viewBox="0 0 1280 896"><g fill="none" stroke="#fff" stroke-width="1.5"><circle cx="59.6" cy="694.9" r="1.5"/><circle cx="65.4" cy="696.6" r="1.5"/><circle cx="59.6" cy="705.3" r="1.5"/><path d="M59.6 696.4V703.8M65.4 698.1C65.4 701.4 59.8 700.6 59.8 703.6"/></g><g fill="none" stroke="#fff" stroke-width="1.7"><path d="M130.4 698.6A4.6 4.6 0 0 1 138.4 697.0"/><path d="M138.9 701.6A4.6 4.6 0 0 1 130.9 703.2"/></g><path d="M139.9 694.6V699.2H135.3Z" fill="#fff"/><path d="M129.4 705.6V701.0H134.0Z" fill="#fff"/><circle cx="159.8" cy="700.4" r="5.7" fill="#fff"/><path d="M157.5 698.1L162.1 702.7M162.1 698.1L157.5 702.7" stroke="#cc6530" stroke-width="1.7"/><path d="M189.1 694.6L195.0 705.4H183.2Z" fill="#fff" stroke="#fff" stroke-width="1" stroke-linejoin="round"/><path d="M189.1 698.2V702.2M189.1 703.3V704.7" stroke="#cc6530" stroke-width="1.4"/><g fill="none" stroke="#fff" stroke-width="1.25"><circle cx="233.1" cy="699.6" r="6.1"/><path d="M229.9 702.6A4.1 4.1 0 1 1 236.3 702.6"/><circle cx="233.1" cy="699.4" r="1.5" fill="#fff"/><path d="M233.1 700.6V707.4" stroke-width="2.2"/></g><g fill="none" stroke="#fff" stroke-width="1.15"><circle cx="282.3" cy="695.4" r="2.0"/><circle cx="277.5" cy="697.0" r="1.5"/><circle cx="287.1" cy="697.0" r="1.5"/><path d="M279.3 706.9V700.0A1.3 1.3 0 0 1 280.6 698.7H284.0A1.3 1.3 0 0 1 285.3 700.0V706.9M282.3 702.4V707.3M279.3 706.9H285.3"/><path d="M277.6 704.8V703.4H275.9V700.9A1.2 1.2 0 0 1 277.1 699.7H278.3M287.0 704.8V703.4H288.7V700.9A1.2 1.2 0 0 0 287.5 699.7H286.3"/></g></svg>
</body></html>
